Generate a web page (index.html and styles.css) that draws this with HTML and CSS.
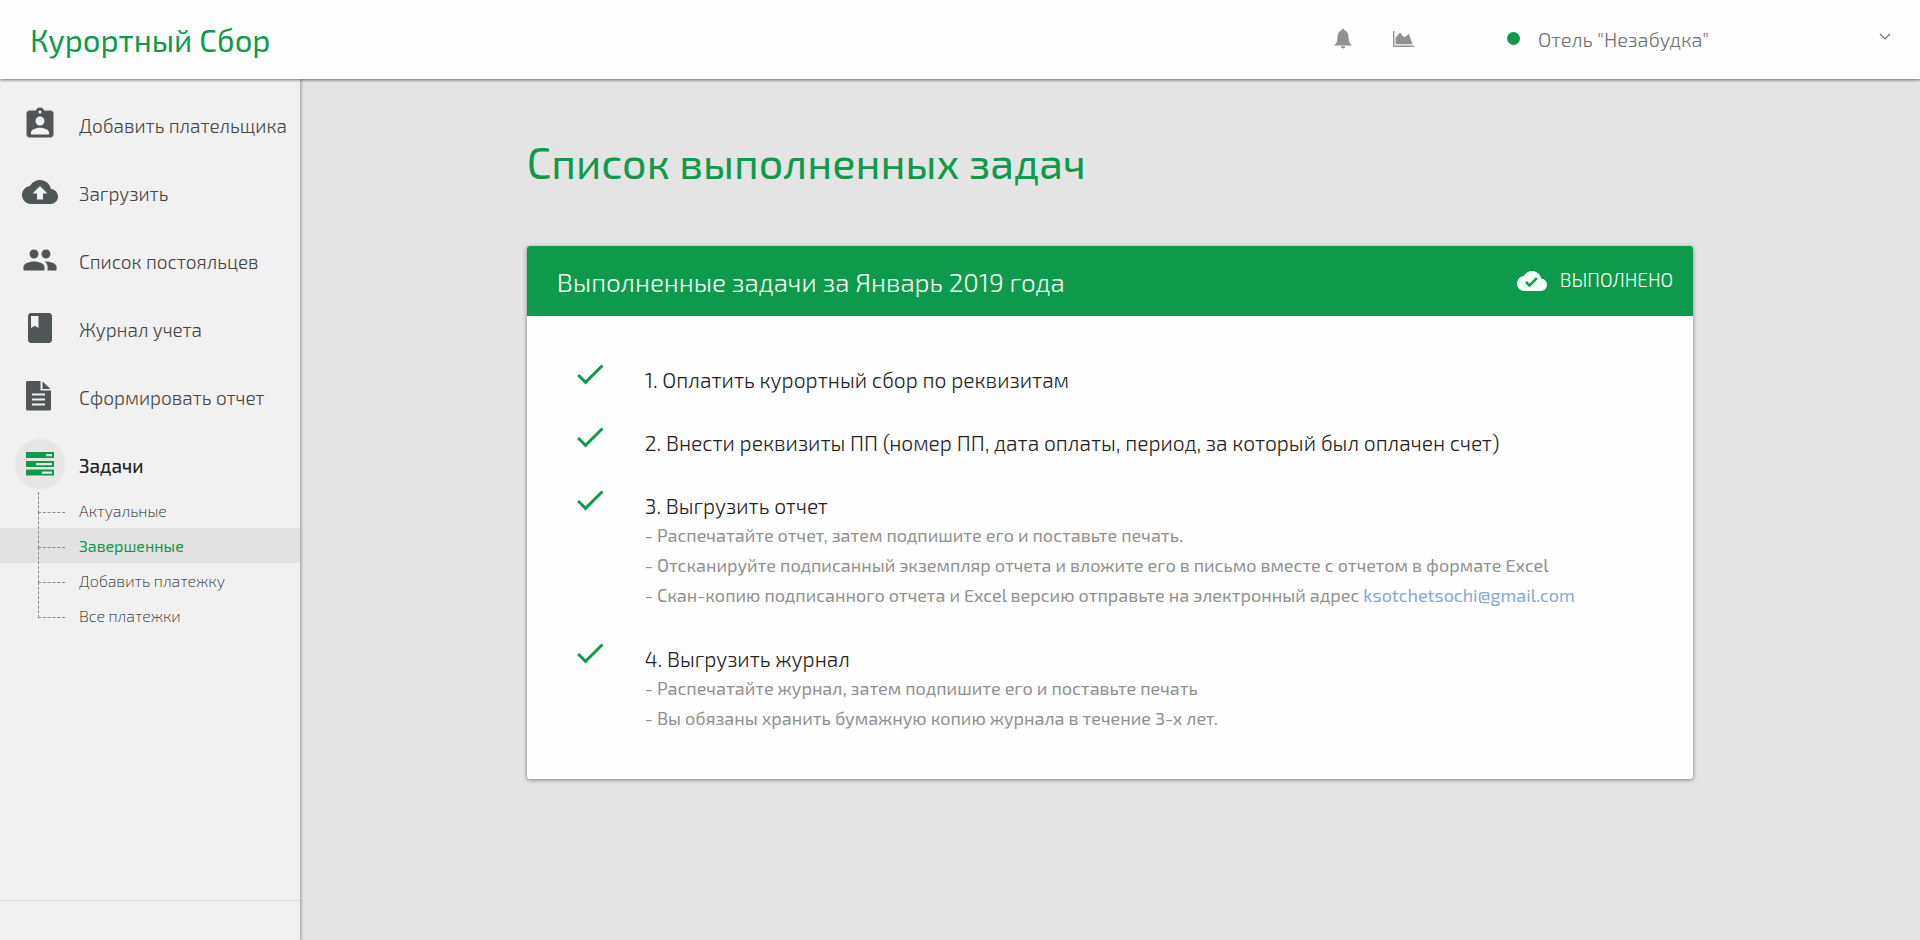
FILE: index.html
```html
<!DOCTYPE html>
<html lang="ru">
<head>
<meta charset="utf-8">
<title>Курортный Сбор</title>
<link rel="stylesheet" href="styles.css">
</head>
<body>
<header class="topbar">
  <a class="logo" href="#">Курортный Сбор</a>
  <div class="tools">
    <button class="tool" type="button" aria-label="Уведомления">
      <svg width="22" height="22" viewBox="0 0 22 22"><path d="M11 1c1 0 1.600.7 1.600 1.600 2.600.8 3.900 3 3.900 6 0 4.500.9 6.900 3.500 8.900H2c2.600-2 3.500-4.400 3.500-8.900 0-3 1.300-5.200 3.900-6C9.400 1.700 10 1 11 1zM8.800 18.300h4.400c0 1.300-.9 2.200-2.200 2.200s-2.200-.9-2.200-2.200z"/></svg>
    </button>
    <button class="tool" type="button" aria-label="Статистика">
      <svg width="22" height="22" viewBox="0 0 22 22"><path d="M1 3h1.400v14.600H22V19H1zM3.500 16.200v-6.200L8 4.500l4 5 5-3.500 3.500 10.200z"/></svg>
    </button>
  </div>
  <button class="account" type="button">
    <span class="dot"></span>
    <span class="account-name">Отель "Незабудка"</span>
    <svg class="chevron" width="12" height="8" viewBox="0 0 12 8"><path d="M1 1l5 5 5-5" fill="none" stroke="currentColor" stroke-width="1.200"/></svg>
  </button>
</header>
<div class="layout">
  <aside class="sidebar">
    <nav class="nav">
      <a class="nav-item" href="#"><span class="nav-icon"><svg width="36" height="36" viewBox="0 0 24 24"><path d="M19 3h-4.180C14.400 1.840 13.300 1 12 1c-1.300 0-2.400.84-2.820 2H5c-1.100 0-2 .9-2 2v14c0 1.100.9 2 2 2h14c1.100 0 2-.9 2-2V5c0-1.100-.9-2-2-2zm-7 0c.55 0 1 .45 1 1s-.45 1-1 1-1-.45-1-1 .45-1 1-1zm0 4c1.660 0 3 1.340 3 3s-1.340 3-3 3-3-1.340-3-3 1.340-3 3-3zm6 12H6v-1.400c0-2 4-3.100 6-3.100s6 1.100 6 3.100V19z"/></svg></span><span>Добавить плательщика</span></a>
      <a class="nav-item" href="#"><span class="nav-icon"><svg width="36" height="36" viewBox="0 0 24 24"><path d="M19.350 10.040C18.670 6.590 15.640 4 12 4 9.110 4 6.600 5.640 5.350 8.040 2.340 8.360 0 10.910 0 14c0 3.310 2.690 6 6 6h13c2.760 0 5-2.240 5-5 0-2.640-2.050-4.780-4.650-4.960zM14 13v4h-4v-4H7l5-5 5 5h-3z"/></svg></span><span>Загрузить</span></a>
      <a class="nav-item" href="#"><span class="nav-icon"><svg width="36" height="36" viewBox="0 0 24 24"><path d="M16 11c1.660 0 2.990-1.340 2.990-3S17.660 5 16 5c-1.660 0-3 1.340-3 3s1.340 3 3 3zm-8 0c1.660 0 2.990-1.340 2.990-3S9.660 5 8 5C6.340 5 5 6.340 5 8s1.340 3 3 3zm0 2c-2.330 0-7 1.170-7 3.500V19h14v-2.500c0-2.330-4.670-3.500-7-3.500zm8 0c-.29 0-.62.02-.97.05 1.160.84 1.970 1.970 1.970 3.450V19h6v-2.500c0-2.330-4.670-3.500-7-3.500z"/></svg></span><span>Список постояльцев</span></a>
      <a class="nav-item" href="#"><span class="nav-icon"><svg width="36" height="36" viewBox="0 0 24 24"><path d="M18 2H6c-1.100 0-2 .9-2 2v16c0 1.100.9 2 2 2h12c1.100 0 2-.9 2-2V4c0-1.100-.9-2-2-2zM6 4h5v8l-2.500-1.500L6 12V4z"/></svg></span><span>Журнал учета</span></a>
      <a class="nav-item" href="#"><span class="nav-icon"><svg width="36" height="36" viewBox="0 0 36 36"><path fill-rule="evenodd" d="M5 3h13.500v9.500h10.500V31a1.500 1.500 0 0 1-1.500 1.500h-22A1.500 1.500 0 0 1 4 31V4.500A1.500 1.500 0 0 1 5.500 3zM20.500 3.500l8 7.500h-8zM10 15.500v2h13v-2zM10 20.500v2h13v-2zM10 25.500v2h13v-2z"/></svg></span><span>Сформировать отчет</span></a>
      <a class="nav-item nav-item-open" href="#"><span class="nav-icon"><svg width="30" height="24" viewBox="0 0 30 24"><path fill-rule="evenodd" d="M1 0h28v6H1zM1 9h28v6H1zM1 17.500h28v6H1zM21 2v2.200h6V2zM11 11v2.200h16V11zM17 19.500v2.200h10v-2.200z"/></svg></span><span>Задачи</span></a>
      <ul class="subnav">
        <li><a href="#">Актуальные</a></li>
        <li><a class="current" href="#">Завершенные</a></li>
        <li><a href="#">Добавить платежку</a></li>
        <li><a href="#">Все платежки</a></li>
      </ul>
    </nav>
    <div class="sidebar-foot"></div>
  </aside>
  <main class="content">
    <h1 class="title">Список выполненных задач</h1>
    <section class="card">
      <div class="card-head">
        <h2>Выполненные задачи за Январь 2019 года</h2>
        <div class="status"><svg width="30" height="30" viewBox="0 0 24 24"><path d="M19.350 10.040C18.670 6.590 15.640 4 12 4 9.110 4 6.600 5.640 5.350 8.040 2.340 8.360 0 10.910 0 14c0 3.310 2.690 6 6 6h13c2.760 0 5-2.240 5-5 0-2.640-2.050-4.780-4.650-4.960zM10 17l-3.500-3.500 1.410-1.410L10 14.170 15.180 9l1.410 1.410L10 17z"/></svg><span>ВЫПОЛНЕНО</span></div>
      </div>
      <ol class="tasks">
        <li class="task"><svg class="check" viewBox="0 0 24 24"><path d="M9 16.170L4.830 12l-1.420 1.410L9 19 21 7l-1.410-1.410z"/></svg><div><h3>1. Оплатить курортный сбор по реквизитам</h3></div></li>
        <li class="task"><svg class="check" viewBox="0 0 24 24"><path d="M9 16.170L4.830 12l-1.420 1.410L9 19 21 7l-1.410-1.410z"/></svg><div><h3>2. Внести реквизиты ПП (номер ПП, дата оплаты, период, за который был оплачен счет)</h3></div></li>
        <li class="task"><svg class="check" viewBox="0 0 24 24"><path d="M9 16.170L4.830 12l-1.420 1.410L9 19 21 7l-1.410-1.410z"/></svg><div><h3>3. Выгрузить отчет</h3>
          <p>- Распечатайте отчет, затем подпишите его и поставьте печать.</p>
          <p>- Отсканируйте подписанный экземпляр отчета и вложите его в письмо вместе с отчетом в формате Excel</p>
          <p>- Скан-копию подписанного отчета и Excel версию отправьте на электронный адрес <a href="mailto:ksotchetsochi@gmail.com">ksotchetsochi@gmail.com</a></p></div></li>
        <li class="task"><svg class="check" viewBox="0 0 24 24"><path d="M9 16.170L4.830 12l-1.420 1.410L9 19 21 7l-1.410-1.410z"/></svg><div><h3>4. Выгрузить журнал</h3>
          <p>- Распечатайте журнал, затем подпишите его и поставьте печать</p>
          <p>- Вы обязаны хранить бумажную копию журнала в течение 3-х лет.</p></div></li>
      </ol>
    </section>
  </main>
</div>
</body>
</html>
```

FILE: styles.css
```css
* { box-sizing: border-box; }

body {
  margin: 0;
  min-height: 100vh;
  display: flex;
  flex-direction: column;
  background: #e4e4e4;
  color: #333;
  font-family: "Exo 2", Roboto, "Noto Sans", sans-serif;
}

h1, h2, h3, p, ul, ol { margin: 0; padding: 0; font-weight: inherit; }
ul, ol { list-style: none; }
a { color: inherit; text-decoration: none; }
svg { display: block; fill: currentColor; flex: none; }
button { font: inherit; border: 0; background: none; padding: 0; cursor: pointer; }

.topbar {
  position: relative;
  z-index: 2;
  display: flex;
  align-items: center;
  height: 79px;
  padding: 0 29px 2px 30px;
  background: #fefefe;
  box-shadow: 0 1px 3px rgba(0, 0, 0, .55);
}
.logo { color: #0d9b4b; font-size: 31px; line-height: 40px; padding-top: 2px; }
.tools { display: flex; gap: 38px; margin-left: auto; }
.tool { color: #8e9292; }
.account {
  display: flex;
  align-items: center;
  width: 384px;
  margin-left: 93px;
  color: #6c7070;
  font-size: 20px;
  font-weight: 300;
  text-align: left;
}
.dot { width: 13px; height: 13px; border-radius: 50%; background: #0d9b4b; margin-right: 18px; }
.account-name { flex: 1; }
.chevron { margin-bottom: 4px; }

.layout { flex: 1; display: flex; }
.sidebar {
  width: 300px;
  display: flex;
  flex-direction: column;
  background: #f1f1f1;
  box-shadow: 1px 0 3px rgba(0, 0, 0, .35);
}
.nav { flex: 1; padding-top: 11px; }
.nav-item {
  display: flex;
  align-items: center;
  gap: 14px;
  height: 68px;
  padding-left: 15px;
  color: #444;
  font-size: 19px;
  font-weight: 300;
  white-space: nowrap;
}
.nav-item > span:last-child { padding-top: 3px; }
.nav-icon {
  display: flex;
  align-items: center;
  justify-content: center;
  width: 50px;
  height: 50px;
  border-radius: 50%;
  color: #505656;
}
.nav-item-open { color: #222; font-weight: 500; }
.nav-item-open .nav-icon { background: #e6e6e6; color: #0d9b4b; }

.subnav { margin-top: -5px; }
.subnav li { position: relative; }
.subnav a {
  display: block;
  padding-left: 79px;
  color: #111;
  font-size: 16px;
  font-weight: 200;
  line-height: 35px;
}
.subnav .current { background: #e2e2e2; color: #0d9b4b; font-weight: 400; }
.subnav li::before {
  content: "";
  position: absolute;
  left: 38px;
  top: -16px;
  width: 26px;
  height: 35px;
  border-left: 1px dashed #888;
  border-bottom: 1px dashed #888;
}
.subnav li:first-child::before { top: -1px; height: 20px; }
.sidebar-foot { height: 40px; border-top: 1px solid #d8d8d8; }

.content { flex: 1; padding: 55px 0 40px; }
.title, .card { width: 72%; margin: 0 auto; }
.title { color: #0d9b4b; font-size: 43px; font-weight: 400; line-height: 56px; }
.card {
  margin-top: 56px;
  border-radius: 3px;
  overflow: hidden;
  background: #fefefe;
  box-shadow: 0 1px 4px rgba(0, 0, 0, .45);
}
.card-head {
  display: flex;
  align-items: center;
  justify-content: space-between;
  height: 70px;
  padding: 0 20px 0 30px;
  background: #0d9b4b;
  color: #f4fff6;
  font-weight: 300;
}
.card-head h2 { font-size: 26px; }
.status { display: flex; align-items: center; gap: 13px; font-size: 19px; }
.status span { padding-bottom: 4px; }
.tasks { padding: 40px 30px 46px 45px; }
.task { display: flex; gap: 37px; padding-bottom: 25px; }
.task:last-child { padding-bottom: 0; }
.check { width: 36px; height: 36px; color: #0d9b4b; }
.task h3 { padding-top: 10px; color: #222; font-size: 21px; font-weight: 300; line-height: 28px; }
.task p { color: #909090; font-size: 18px; line-height: 30px; }
.task p a { color: #8aa8d2; }
```
